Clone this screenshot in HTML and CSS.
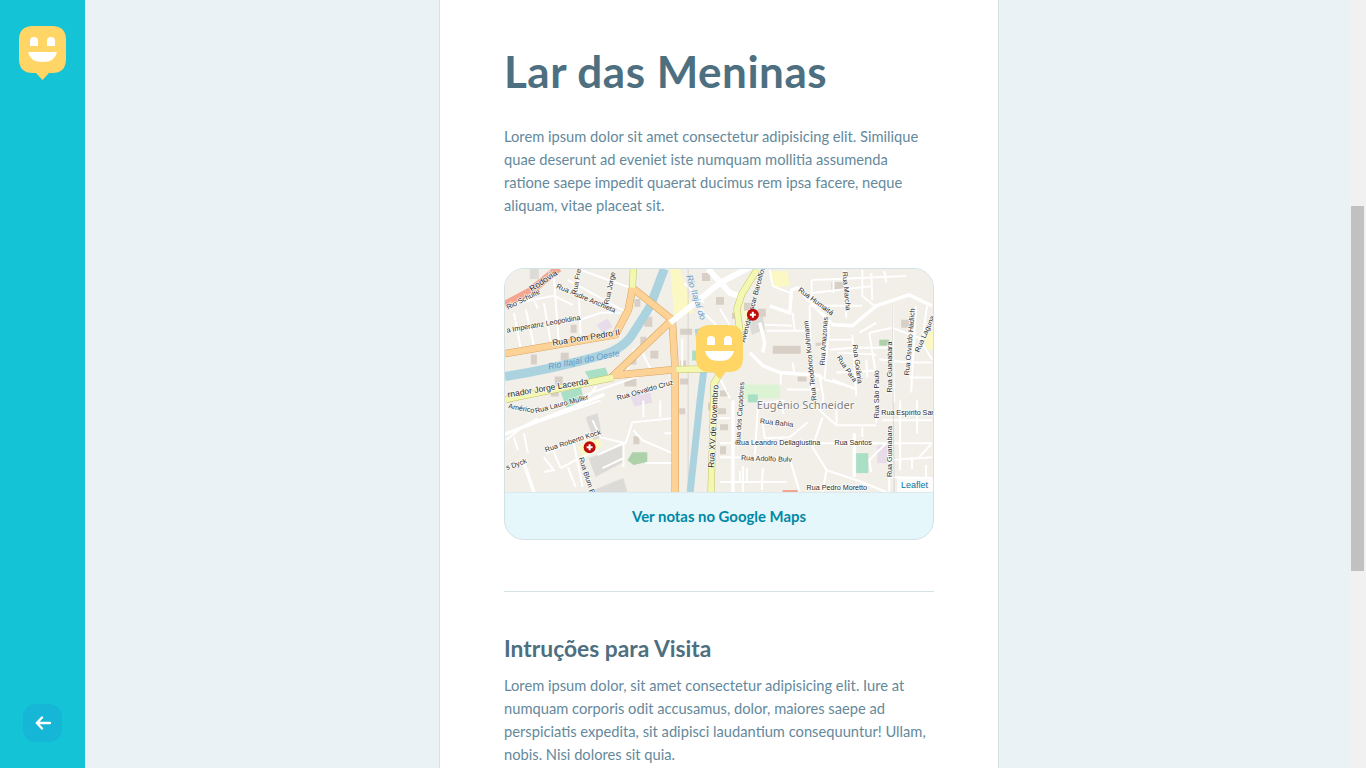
FILE: index.html
```html
<!DOCTYPE html>
<html lang="en">
<head>
  <meta charset="UTF-8">
  <meta name="viewport" content="width=device-width, initial-scale=1.0">
  <title>Lar das Meninas</title>
  <link rel="stylesheet" href="styles.css">
</head>
<body>
  <div class="app">
    <aside class="sidebar">
      <svg class="logo" viewBox="0 0 47 54">
        <path class="logo-face" d="M14 0H33Q47 0 47 14V33Q47 47 33 47H30L23.500 54L17 47H14Q0 47 0 33V14Q0 0 14 0Z"/>
        <path class="logo-smile" d="M11 15V20H19V15A4 4 0 0 0 11 15ZM28 15V20H36V15A4 4 0 0 0 28 15ZM9 26H38Q36 36 23.500 36Q11 36 9 26Z"/>
      </svg>
      <button class="back-btn">
        <svg viewBox="0 0 16 14">
          <path d="M7 1.500L1.800 7L7 12.500M2 7H15"/>
        </svg>
      </button>
    </aside>

    <main class="content">
      <article class="card">
        <h1>Lar das Meninas</h1>
        <p class="about">Lorem ipsum dolor sit amet consectetur adipisicing elit. Similique quae deserunt ad eveniet iste numquam mollitia assumenda ratione saepe impedit quaerat ducimus rem ipsa facere, neque aliquam, vitae placeat sit.</p>

        <section class="map-box">
          <div class="map">
            <svg class="map-svg" viewBox="0 0 430 224">
              <g class="map-shapes">
                <rect class="land" width="430" height="224"/>

                <!-- areas -->
                <path class="pale" d="M166 0H176L190 44L170 47Z"/>
                <path class="pale" d="M266 2H284L286 17L270 18Z"/>
                <path class="pale" d="M419 62H430V81H424Z"/>
                <path class="pale" d="M238 34H246L246 60L240 62Z"/>
                <path class="pale" d="M73 179L93 167L98 177L79 190Z"/>
                <path class="mint" d="M240 116H276V130H240Z"/>
                <path class="aqua" d="M351 185H365V205H351Z"/>
                <path class="aqua" d="M80 103L101 99L105 110L88 116Z"/>
                <path class="aqua" d="M56 124L76 118L80 134L62 140Z"/>
                <path class="aqua" d="M188 82H196V92H188Z"/>
                <path class="aqua" d="M244 126H254V134H244Z"/>
                <path class="green" d="M123 192L128 184H143V194L129 197Z"/>
                <path class="green" d="M376 71H386V77H376Z"/>
                <path class="lilac" d="M374 177H384V195H374Z"/>
                <path class="lilac" d="M92 56L103 50L108 58L98 64Z"/>
                <path class="lilac" d="M126 128L146 124L148 134L130 138Z"/>
                <path class="grey" d="M84 190L119 177V194L91 209Z"/>
                <path class="grey" d="M81 149L93 145L98 169L89 172Z"/>
                <path class="grey" d="M89 222L119 210L123 224H89Z"/>
                <path class="grey" d="M244 49L259 46L261 61L248 66Z"/>
                <path class="grey" d="M25 0H34V10H25Z"/>

                <!-- buildings -->
                <path class="house" d="M269 77H297V85H269ZM312 74H318V77H312ZM294 108H303V113H294ZM328 13H341V22H328ZM398 51H406V59H398Z"/>
                <path class="house" d="M46 118H54V128H46ZM2 124H8V134H2ZM130 30H136V38H130ZM140 48H148V58H140ZM56 84H64V92H56ZM26 86H32V96H26ZM176 60H188V66H176ZM176 92H182V102H176Z"/>
                <path class="house" d="M129 168H135V176H129ZM175 140H181V146H175ZM210 66H220V72H210ZM196 92H204V100H196ZM212 140H222V146H212ZM216 178H222V186H216ZM204 134H210V142H204ZM240 34H250V42H240ZM254 40H262V48H254ZM120 110H132V118H120ZM50 108H58V116H50Z"/>
                <path class="house" d="M136 68H142V76H136ZM146 82H154V90H146ZM126 88H132V96H126ZM66 56H72V64H66ZM216 156H224V162H216ZM216 122H224V128H216ZM198 4H206V12H198ZM212 28H220V36H212ZM228 44H236V50H228ZM176 110H184V116H176Z"/>

                <!-- streets -->
                <g class="street">
                  <path d="M63 11L123 44M76 1L126 19M49 7L54 74M73 4L76 66M29 31L33 40M9 44L16 81M21 41L29 77M39 34L46 74"/>
                  <path d="M76 51L96 44L116 44M1 36L49 27L68 36M79 127L136 107M120 110L130 80M136 80L148 104M84 128L92 118"/>
                  <path d="M1 165L96 132M1 172L16 160L33 150M19 165L23 185M9 169L13 182M41 185L93 165M39 189L49 202L39 204M49 184L56 200M56 200L71 192L93 182M63 199L71 219M69 175L78 219"/>
                  <path d="M88 152L96 169L121 175L128 154L168 150M93 187L119 175M98 200L119 190M119 175V199M129 162L138 172L168 185M141 195H168M139 132V149M156 132V149M160 165H168"/>
                  <path d="M266 1L269 17L286 24M309 11L403 7M308 11V37M330 12V24M359 1V27L371 37M341 1L343 49M309 24L369 17M306 37H359M368 4L369 31M381 2L383 14"/>
                  <path d="M306 37L308 127M261 56L288 57M263 62L306 62M289 44L291 62M326 71H349M326 81L349 79M326 54L321 111M349 66L353 127M356 64L373 54M366 64L389 59L416 69L429 91M366 64L376 127"/>
                  <path d="M349 79L386 79M334 84L373 86M376 91L406 94L429 94M333 104L373 102M363 91L364 109M329 111L353 121M321 111L353 120M413 37L408 124M424 37L419 74M389 37L391 134M406 109H429M289 94L291 107M283 121L316 121M259 135L281 132"/>
                  <path d="M259 155L261 170L286 169L304 154M216 175H309L383 175M254 139L251 187M216 189L286 190L296 224M259 200L258 222M216 214H283M236 203V214M243 200V214M319 149L309 179L323 202L353 212L383 224M323 202L319 224"/>
                  <path d="M316 142L333 157H373M333 142V157M359 159V169M373 132V155M386 162V224M368 204L366 192L383 175M386 192L429 189M397 175V202M409 189V201M423 197V210M386 209L429 210M386 175H429M416 189L429 175M379 152H429M397 132V175M414 132V165"/>
                  <path d="M316 107L320 130L316 142M277 104V116M239 224V198M276 132L280 146"/>
                  <path d="M132 62L150 40M138 82L158 60M178 70V100M180 14L200 34M196 40L212 56M216 40L228 60M216 110L226 130M214 150H226"/>
                </g>
                <g class="dotted">
                  <path d="M266 37L286 44L288 21L294 19L329 56L349 57L373 37L406 26L429 37"/>
                  <path d="M246 84L259 97L276 104L316 107L319 111M256 54L261 74L259 84"/>
                  <path d="M19 195L29 224M229 132V224M351 165V209M0 166L60 142L100 126"/>
                </g>
                <path class="rail" d="M184 0V224M389 37L391 224"/>

                <!-- salmon road -->
                <path class="salmon" d="M0 36L26 22L54 -1"/>
                <path class="salmon-thin" d="M279 223H294"/>

                <!-- rivers -->
                <path class="river" d="M0 108Q50 100 96 87Q120 80 129 64Q142 44 146 37L160 0"/>
                <path class="river-thin" d="M186 224L196 132L200 100L194 60"/>

                <!-- main roads -->
                <path class="road-casing" d="M0 85L111 66L124 41L128 19L168 51L171 101L171 224M168 51L109 107L171 101"/>
                <path class="road" d="M0 85L111 66L124 41L128 19L168 51L171 101L171 224M168 51L109 107L171 101"/>
                <path class="road-white" d="M166 54L216 14L250 -4M204 0L226 24L238 28"/>
                <path class="road-lime-casing" d="M1 131L109 109M129 0L128 19M172 101L224 100M253 1L238 25L233 40L236 62L225 90L210 115L207 224"/>
                <path class="road-lime" d="M1 131L109 109M129 0L128 19M172 101L224 100M253 1L238 25L233 40L236 62L225 90L210 115L207 224"/>
              </g>

              <!-- road labels -->
              <g class="label">
                <text class="label-big" transform="translate(27 23) rotate(-34)">Rodovia</text>
                <text transform="translate(3 41) rotate(-27)">Rio Schulte</text>
                <text transform="translate(51 19) rotate(23)">Rua Padre Anchieta</text>
                <text transform="translate(72 26) rotate(-80)">Rua Frei</text>
                <text transform="translate(104 36) rotate(-78)">Rua Jorge</text>
                <text transform="translate(2 64) rotate(-10)">a Imperatriz Leopoldina</text>
                <text class="label-big" transform="translate(48 77) rotate(-9)">Rua Dom Pedro II</text>
                <text class="label-big" transform="translate(3 129) rotate(-9.500)">rnador Jorge Lacerda</text>
                <text transform="translate(3 140) rotate(10)">Américo</text>
                <text transform="translate(31 145) rotate(-15)">Rua Lauro Müller</text>
                <text transform="translate(113 132) rotate(-16)">Rua Osvaldo Cruz</text>
                <text transform="translate(41 184) rotate(-18)">Rua Roberto Kock</text>
                <text transform="translate(74 190) rotate(72)">Rua Blum B</text>
                <text transform="translate(2 202) rotate(-20)">s Dyck</text>
                <text class="label-big" transform="translate(210 200) rotate(-87)">Rua XV de Novembro</text>
                <text transform="translate(241 74) rotate(-75)">Avenida Oscar Barcellos</text>
                <text transform="translate(236 177) rotate(-86)">Rua dos Caçadores</text>
                <text transform="translate(294 22) rotate(36)">Rua Humaitá</text>
                <text transform="translate(321 97) rotate(-86)">Rua Amazonas</text>
                <text transform="translate(333 89) rotate(56)">Rua Pará</text>
                <text transform="translate(349 76) rotate(82)">Rua Goiânia</text>
                <text transform="translate(313 132) rotate(-96)">Rua Teodórico Kuhlmann</text>
                <text transform="translate(389 124) rotate(-90)">Rua Guanabara</text>
                <text transform="translate(389 209) rotate(-90)">Rua Guanabara</text>
                <text transform="translate(406 107) rotate(-85)">Rua Osvaldo Hadlich</text>
                <text transform="translate(416 84) rotate(-66)">Rua Laguna</text>
                <text transform="translate(376 150) rotate(-90)">Rua São Paulo</text>
                <text transform="translate(378 147)">Rua Espírito Sant</text>
                <text transform="translate(256 155) rotate(6)">Rua Bahia</text>
                <text transform="translate(232 177)">Rua Leandro Dellagiustina</text>
                <text transform="translate(331 177)">Rua Santos</text>
                <text transform="translate(237 192) rotate(2)">Rua Adolfo Bulv</text>
                <text transform="translate(303 222)">Rua Pedro Moretto</text>
                <text transform="translate(339 3) rotate(85)">Rua Marcha</text>
                <text class="label-area" x="253" y="141">Eugênio Schneider</text>
                <text class="label-river" transform="translate(44 101) rotate(-11)">Rio Itajaí do Oeste</text>
                <text class="label-river" transform="translate(182 7) rotate(72)">Rio Itajaí do</text>
              </g>

              <!-- hospitals -->
              <g class="hospital" transform="translate(249 46)">
                <circle r="6"/>
                <path d="M-3 0H3M0 -3V3"/>
              </g>
              <g class="hospital" transform="translate(85 179)">
                <circle r="6"/>
                <path d="M-3 0H3M0 -3V3"/>
              </g>
            </svg>
            <svg class="map-pin" viewBox="0 0 47 54">
              <path class="logo-face" d="M14 0H33Q47 0 47 14V33Q47 47 33 47H30L23.500 54L17 47H14Q0 47 0 33V14Q0 0 14 0Z"/>
              <path class="logo-smile" d="M11 15V20H19V15A4 4 0 0 0 11 15ZM28 15V20H36V15A4 4 0 0 0 28 15ZM9 26H38Q36 36 23.500 36Q11 36 9 26Z"/>
            </svg>
            <span class="attribution">Leaflet</span>
          </div>
          <div class="map-footer">Ver notas no Google Maps</div>
        </section>

        <hr class="divider">

        <h2>Intruções para Visita</h2>
        <p class="about">Lorem ipsum dolor, sit amet consectetur adipisicing elit. Iure at numquam corporis odit accusamus, dolor, maiores saepe ad perspiciatis expedita, sit adipisci laudantium consequuntur! Ullam, nobis. Nisi dolores sit quia.</p>
      </article>
    </main>

    <div class="scrollbar">
      <div class="scrollbar-thumb"></div>
    </div>
  </div>
</body>
</html>
```

FILE: styles.css
```css
:root {
  --sidebar: #15c3d6;
  --bg: #ebf2f5;
  --line: #d3e2e5;
  --title: #4d6f80;
  --text: #64899c;
  --yellow: #ffd666;
}

* {
  margin: 0;
  padding: 0;
  box-sizing: border-box;
}

body {
  font-family: 'Lato', 'Noto Sans', sans-serif;
  background: var(--bg);
  color: var(--text);
  height: 100vh;
  overflow: hidden;
}

.app {
  display: flex;
  height: 100vh;
}

.sidebar {
  width: 85px;
  flex-shrink: 0;
  background: var(--sidebar);
  display: flex;
  flex-direction: column;
  align-items: center;
  justify-content: space-between;
  padding: 26px 0;
}

.logo {
  width: 47px;
  height: 54px;
}

.logo-face {
  fill: var(--yellow);
}

.logo-smile {
  fill: #ffffff;
}

.back-btn {
  width: 39px;
  height: 38px;
  border: none;
  border-radius: 13px;
  background: #15b6d6;
  display: flex;
  align-items: center;
  justify-content: center;
}

.back-btn svg {
  width: 16px;
  height: 14px;
  fill: none;
  stroke: #ffffff;
  stroke-width: 2.4;
  stroke-linecap: round;
  stroke-linejoin: round;
}

.content {
  flex: 1;
  display: flex;
  justify-content: center;
  align-items: flex-start;
  overflow: hidden;
  padding-left: 3px;
}

.card {
  width: 560px;
  flex-shrink: 0;
  min-height: 900px;
  background: #ffffff;
  border-left: 1px solid var(--line);
  border-right: 1px solid var(--line);
  padding: 44px 64px 0;
}

h1 {
  font-size: 44px;
  line-height: 54px;
  font-weight: 700;
  letter-spacing: 0.5px;
  color: var(--title);
  margin-bottom: 27px;
}

.about {
  font-size: 14.700px;
  line-height: 23px;
  color: var(--text);
}

.map-box {
  margin-top: 51px;
  border: 1px solid var(--line);
  border-radius: 20px;
  overflow: hidden;
  background: #e6f7fb;
}

.map {
  position: relative;
  height: 223px;
}

.map-svg {
  display: block;
  width: 428px;
  height: 223px;
}

.map-shapes {
  filter: blur(0.35px);
}

.land {
  fill: #f2efe9;
}

.pale { fill: #fbf8c4; }
.mint { fill: #dcf3d4; }
.aqua { fill: #a8dfc5; }
.green { fill: #add1a8; }
.lilac { fill: #e8dcea; }
.grey { fill: #dddbd8; }
.house { fill: #d8cfc6; }

.street {
  fill: none;
  stroke: #ffffff;
  stroke-width: 2;
}

.dotted {
  fill: none;
  stroke: #ffffff;
  stroke-width: 3.500;
}

.rail {
  fill: none;
  stroke: #c9c6c2;
  stroke-width: 0.6;
}

.salmon {
  fill: none;
  stroke: #f3a58f;
  stroke-width: 8;
}

.salmon-thin {
  fill: none;
  stroke: #f3a58f;
  stroke-width: 2;
}

.river {
  fill: none;
  stroke: #aad3df;
  stroke-width: 9;
}

.river-thin {
  fill: none;
  stroke: #aad3df;
  stroke-width: 7;
}

.road-casing {
  fill: none;
  stroke: #d9a25c;
  stroke-width: 7.500;
}

.road {
  fill: none;
  stroke: #fcd296;
  stroke-width: 6.500;
}

.road-white {
  fill: none;
  stroke: #ffffff;
  stroke-width: 6;
}

.road-lime-casing {
  fill: none;
  stroke: #c0c46c;
  stroke-width: 7;
}

.road-lime {
  fill: none;
  stroke: #f4f7b0;
  stroke-width: 6;
}

.label text {
  font-family: 'Liberation Sans', sans-serif;
  font-size: 7.200px;
  fill: #2c2c2c;
  stroke: rgba(255, 255, 255, 0.8);
  stroke-width: 1.500;
  paint-order: stroke;
}

.label .label-big {
  font-size: 8.600px;
}

.label .label-area {
  font-family: 'Noto Sans', sans-serif;
  font-size: 11.200px;
  fill: #808080;
}

.label .label-river {
  font-size: 8.800px;
  font-style: italic;
  fill: #6699cc;
  stroke: none;
}

.hospital circle {
  fill: #bf0a0a;
}

.hospital path {
  fill: none;
  stroke: #ffffff;
  stroke-width: 2;
}

.map-pin {
  position: absolute;
  left: 191px;
  top: 56px;
  width: 47px;
  height: 54px;
}

.attribution {
  position: absolute;
  right: 0;
  bottom: 0;
  padding: 0 5px 0 4px;
  background: rgba(255, 255, 255, 0.8);
  font-family: 'Liberation Sans', sans-serif;
  font-size: 9px;
  line-height: 14px;
  color: #0078a8;
}

.map-footer {
  height: 47px;
  display: flex;
  align-items: center;
  justify-content: center;
  border-top: 1px solid #dde9ee;
  font-size: 14.900px;
  font-weight: 700;
  color: #0089a5;
}

.divider {
  border: none;
  height: 1px;
  background: var(--line);
  margin: 51px 0 39px;
}

h2 {
  font-size: 22.800px;
  line-height: 34px;
  font-weight: 700;
  color: var(--title);
  margin-bottom: 9px;
}

.scrollbar {
  width: 16px;
  flex-shrink: 0;
  background: #f1f1f1;
  padding: 206px 2px 0 1px;
}

.scrollbar-thumb {
  height: 365px;
  background: #c1c1c1;
}
```
